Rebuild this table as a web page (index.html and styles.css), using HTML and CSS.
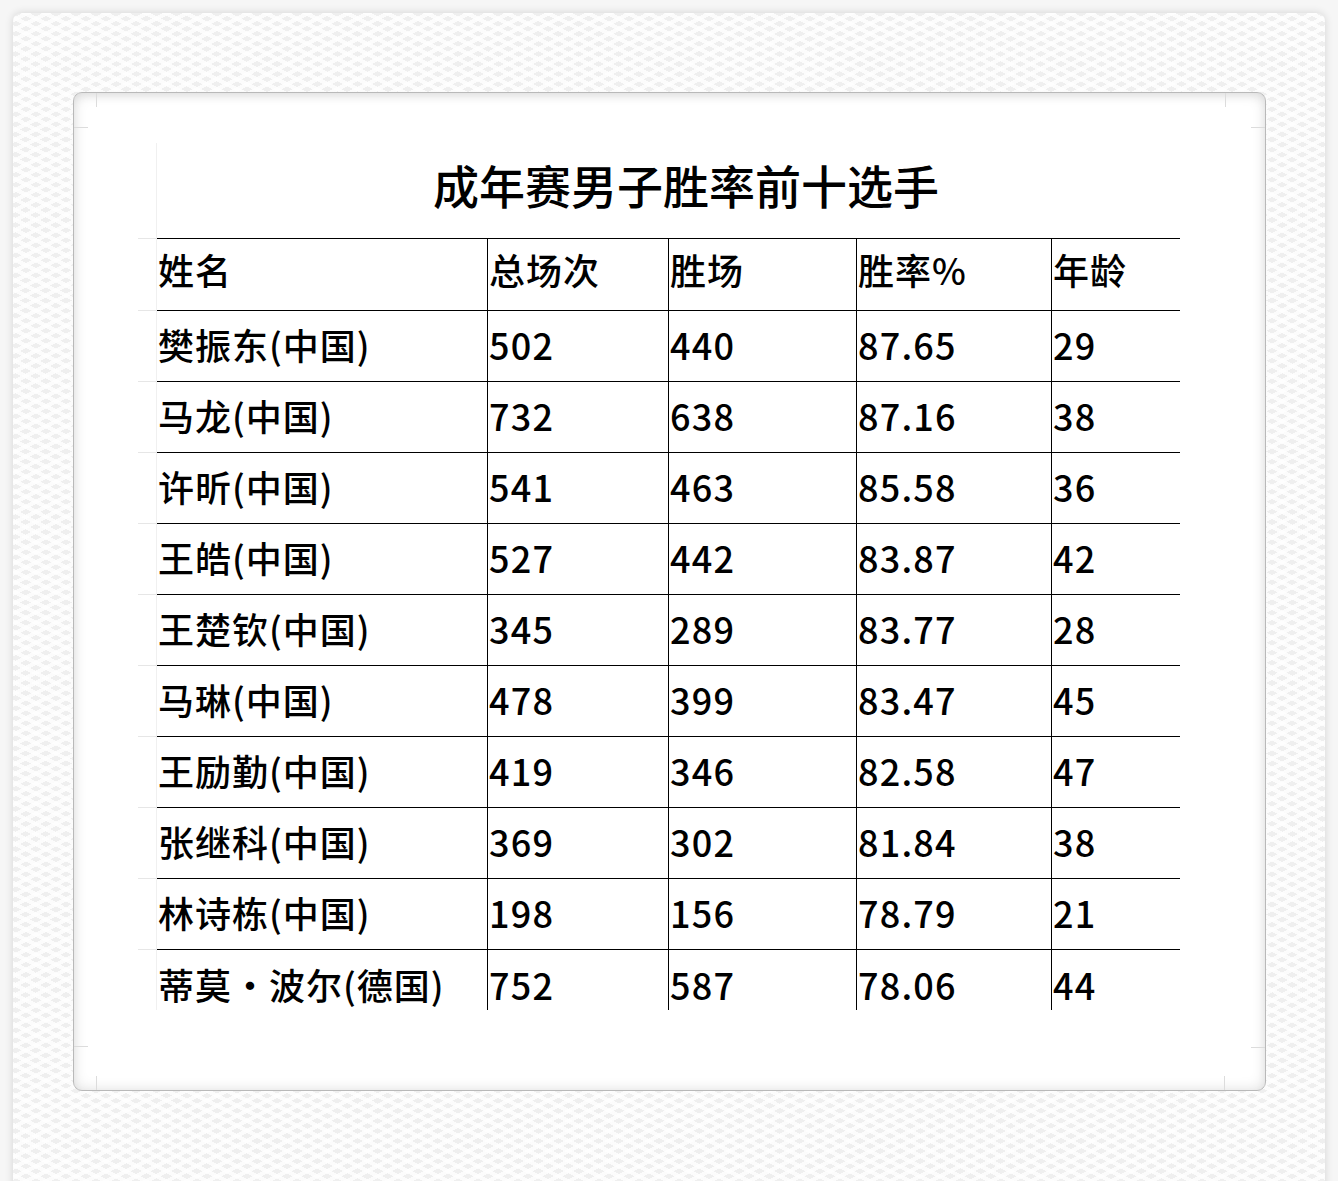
FILE: index.html
```html
<!DOCTYPE html>
<html lang="zh-CN">
<head>
<meta charset="utf-8">
<title>成年赛男子胜率前十选手</title>
<link rel="stylesheet" href="styles.css">
</head>
<body>
<div class="page">
  <div class="card">
    <span class="mark v tl"></span><span class="mark h tlh"></span>
    <span class="mark v tr"></span><span class="mark h trh"></span>
    <span class="mark v bl"></span><span class="mark h blh"></span>
    <span class="mark v br"></span><span class="mark h brh"></span>
    <div class="sheet">
      <div class="gut tgut"></div>
      <div class="title">成年赛男子胜率前十选手</div>

      <div class="gut hg"></div>
      <div class="c hd">姓名</div><div class="c hd sep">总场次</div><div class="c hd sep">胜场</div><div class="c hd sep">胜率%</div><div class="c hd sep">年龄</div>

      <div class="gut"></div><div class="c">樊振东(中国)</div><div class="c sep n">502</div><div class="c sep n">440</div><div class="c sep n">87.65</div><div class="c sep n">29</div>
      <div class="gut"></div><div class="c">马龙(中国)</div><div class="c sep n">732</div><div class="c sep n">638</div><div class="c sep n">87.16</div><div class="c sep n">38</div>
      <div class="gut"></div><div class="c">许昕(中国)</div><div class="c sep n">541</div><div class="c sep n">463</div><div class="c sep n">85.58</div><div class="c sep n">36</div>
      <div class="gut"></div><div class="c">王皓(中国)</div><div class="c sep n">527</div><div class="c sep n">442</div><div class="c sep n">83.87</div><div class="c sep n">42</div>
      <div class="gut"></div><div class="c">王楚钦(中国)</div><div class="c sep n">345</div><div class="c sep n">289</div><div class="c sep n">83.77</div><div class="c sep n">28</div>
      <div class="gut"></div><div class="c">马琳(中国)</div><div class="c sep n">478</div><div class="c sep n">399</div><div class="c sep n">83.47</div><div class="c sep n">45</div>
      <div class="gut"></div><div class="c">王励勤(中国)</div><div class="c sep n">419</div><div class="c sep n">346</div><div class="c sep n">82.58</div><div class="c sep n">47</div>
      <div class="gut"></div><div class="c">张继科(中国)</div><div class="c sep n">369</div><div class="c sep n">302</div><div class="c sep n">81.84</div><div class="c sep n">38</div>
      <div class="gut"></div><div class="c">林诗栋(中国)</div><div class="c sep n">198</div><div class="c sep n">156</div><div class="c sep n">78.79</div><div class="c sep n">21</div>
      <div class="gut last"></div><div class="c last">蒂莫·波尔(德国)</div><div class="c sep n last">752</div><div class="c sep n last">587</div><div class="c sep n last">78.06</div><div class="c sep n last">44</div>
    </div>
  </div>
</div>
</body>
</html>
```

FILE: styles.css
```css
html, body {
  margin: 0;
  padding: 0;
  height: 100%;
  overflow: hidden;
  background: #f6f6f6;
}

.page {
  margin: 13px 13px 0 13px;
  height: 1220px;
  border-radius: 8px;
  background-color: #efefef;
  background-image:
    repeating-linear-gradient(26.6deg, rgba(255,255,255,0) 0 5px, rgba(255,255,255,0.8) 5px 9px),
    repeating-linear-gradient(-26.6deg, rgba(255,255,255,0) 0 5px, rgba(255,255,255,0.8) 5px 9px);
  box-shadow: 0 0 8px rgba(0,0,0,0.14);
  padding-top: 79px;
  padding-left: 60px;
  box-sizing: border-box;
}

.card {
  position: relative;
  width: 1193px;
  height: 999px;
  box-sizing: border-box;
  background: #ffffff;
  border: 1px solid #b9b9b9;
  border-radius: 9px;
  box-shadow: inset 0 0 14px rgba(0,0,0,0.13), inset 0 4px 8px rgba(0,0,0,0.05);
  padding: 50px 0 0 64px;
}

.mark {
  position: absolute;
  background: #dcdcdc;
}
.mark.v { width: 1px; height: 14px; }
.mark.h { height: 1px; width: 14px; }
.tl { left: 22px; top: 0; }
.tr { left: 1151px; top: 0; }
.bl { left: 22px; bottom: 0; }
.br { left: 1150px; bottom: 0; }
.tlh { left: 0; top: 34px; }
.blh { left: 0; top: 953px; }
.trh { right: 0; top: 34px; }
.brh { right: 0; top: 954px; }

.sheet {
  display: grid;
  grid-template-columns: 19px 330px 181px 188px 195px 129px;
  grid-auto-rows: 71px;
  grid-template-rows: 95px 73px;
  height: 867px;
  overflow: hidden;
  font-family: "Noto Sans CJK SC", "Noto Sans", sans-serif;
  color: #000;
}

.gut {
  box-sizing: border-box;
  border-right: 1px solid #f0f0f0;
  border-bottom: 1px solid #e6e6e6;
}
.gut.tgut { border-bottom: none; }
.gut.hg { border-top: 1px solid #e6e6e6; }
.gut.last { border-bottom: none; }

.title {
  grid-column: 2 / -1;
  display: flex;
  align-items: center;
  justify-content: center;
  padding: 0 0 14px 35px;
  box-sizing: border-box;
  font-size: 46px;
  font-weight: 500;
  line-height: 1;
  white-space: nowrap;
}

.c {
  box-sizing: border-box;
  display: flex;
  align-items: center;
  padding: 0 0 4px 1px;
  font-size: 36px;
  font-weight: 500;
  letter-spacing: 1px;
  line-height: 1;
  white-space: nowrap;
  border-bottom: 1px solid #000;
}
.c.n { letter-spacing: 1.2px; }
.c.sep { border-left: 1px solid #000; }
.c.hd {
  border-top: 1px solid #000;
  padding-bottom: 12px;
}
.c.last { border-bottom: none; }
```
